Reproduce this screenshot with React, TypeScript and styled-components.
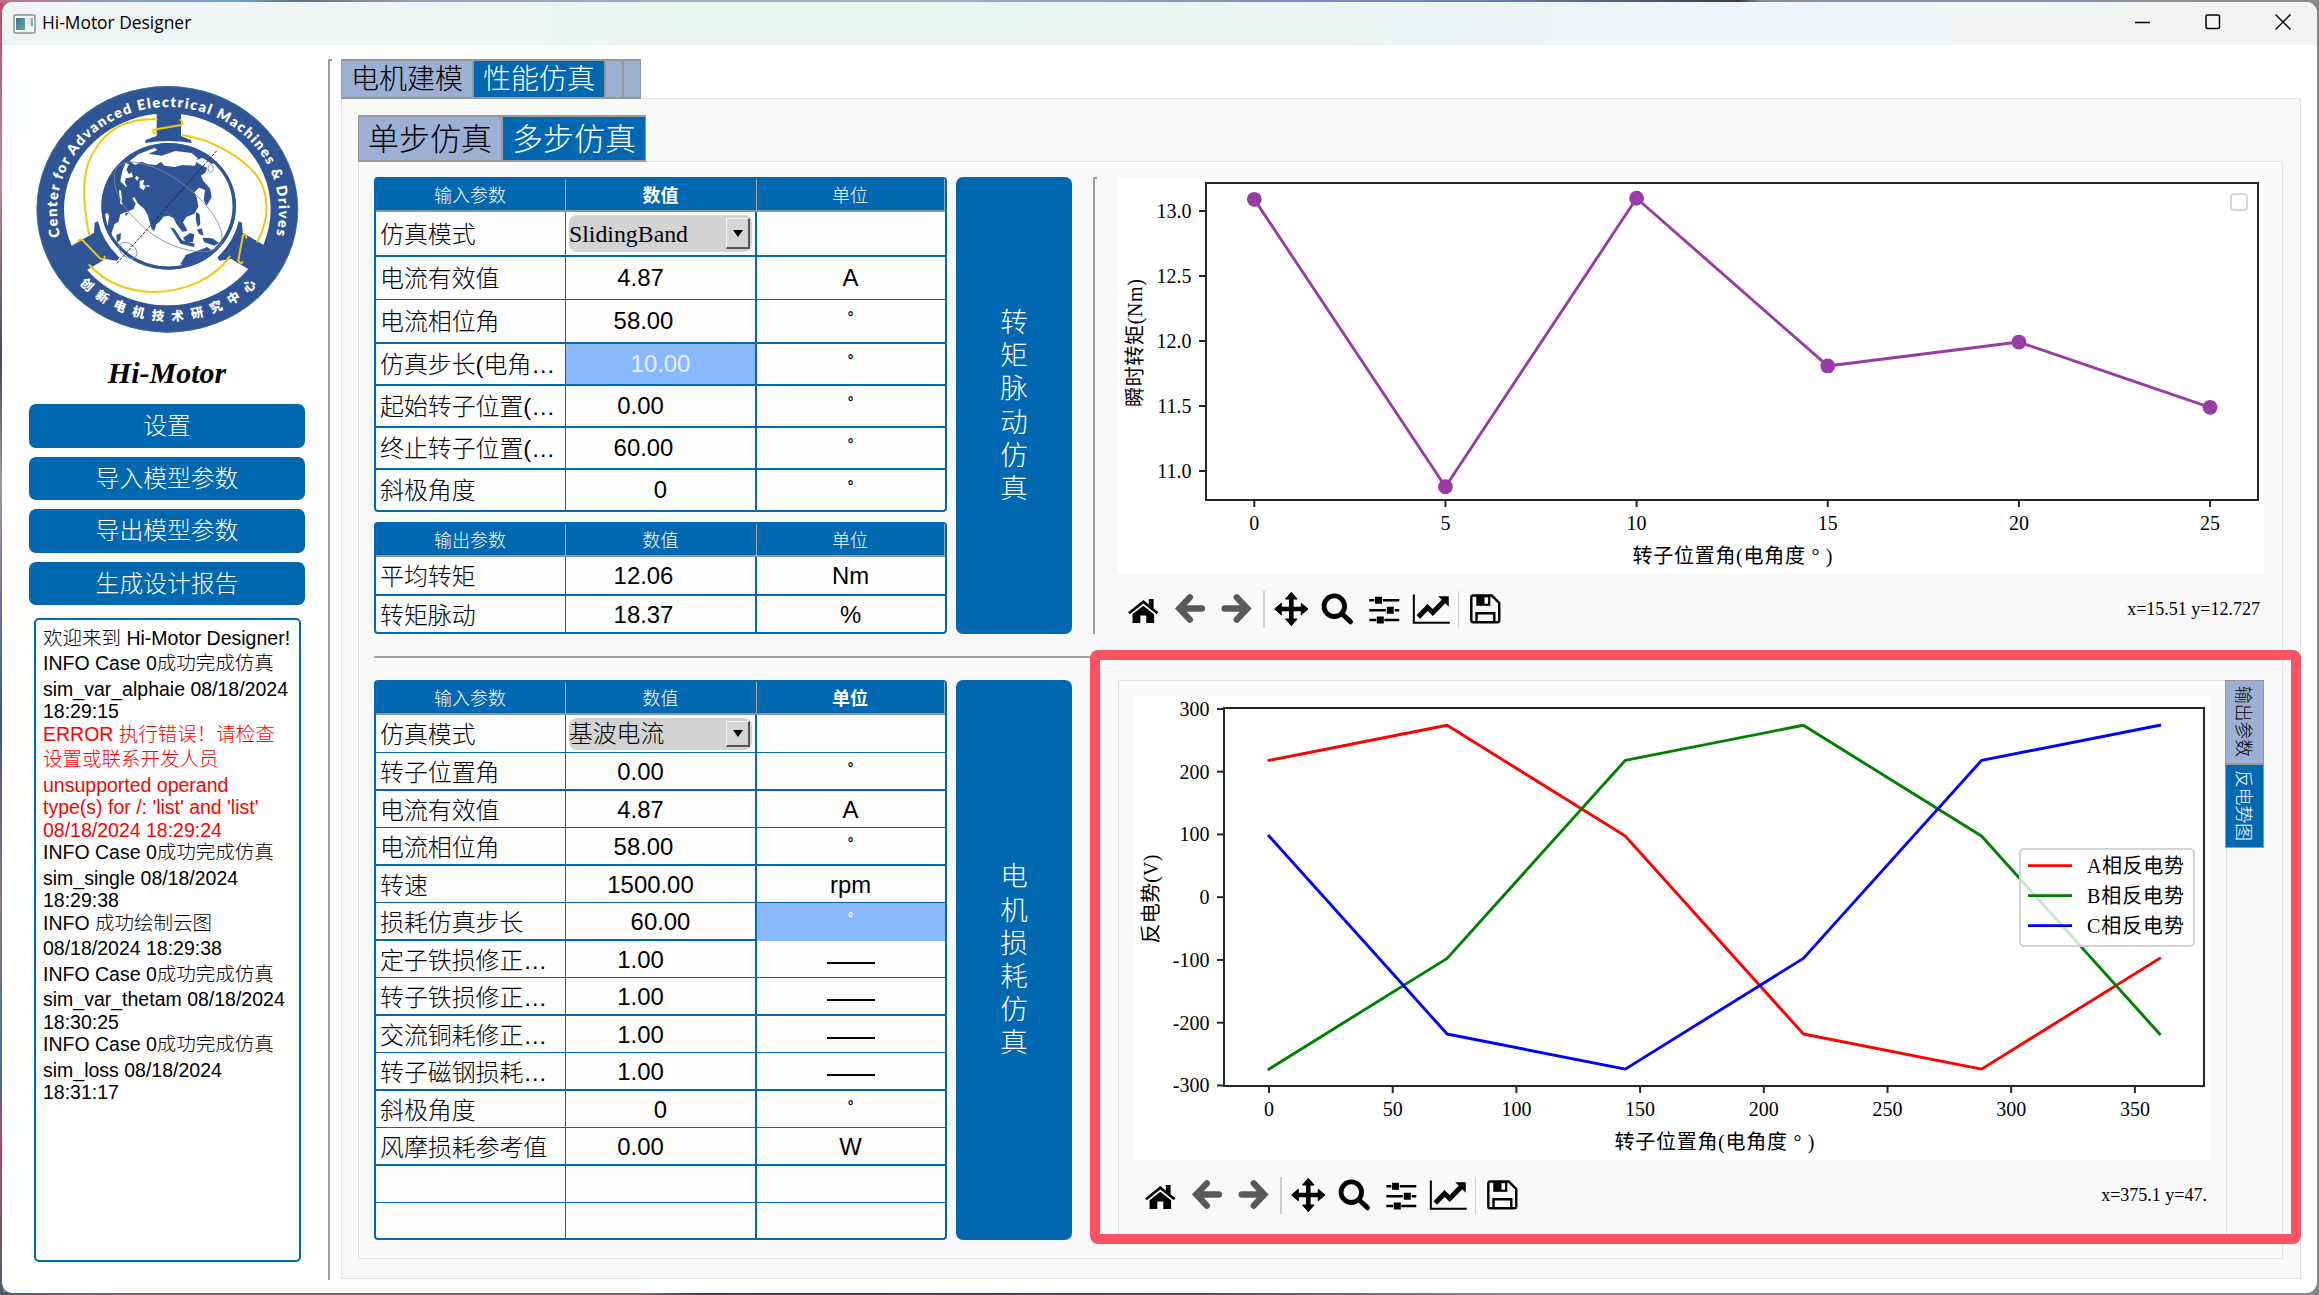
import React from "react";
import styled, { createGlobalStyle, css } from "styled-components";

const BLUE = "#0067b1";
const TAB_IDLE = "#9bb0d2";
const PANEL = "#f9f9f9";
const LINE = "#e2e2e2";
const SANS = `"Liberation Sans", "Noto Sans CJK SC", sans-serif`;
const SERIF = `"Liberation Serif", "Noto Sans CJK SC", serif`;

const GlobalStyle = createGlobalStyle`
  * { box-sizing: border-box; }
  body { margin: 0; overflow: hidden; font-family: ${SANS}; color: #000; }
`;

/* ---------- window frame ---------- */

const Desktop = styled.div`
  width: 2319px;
  height: 1295px;
  padding: 2px 2px 2px 2px;
  background:
    linear-gradient(90deg, #b8708a 0, #8d9db8 120px, #6fa0c8 240px, #62717f 300px, #9aa4b4 420px, #9fb0c8 900px, #6a7fae 1500px, #3c3c48 1740px, #8a8a8a 1760px, #8793b8 1850px, #8f8a8a 2319px) top / 100% 3px no-repeat,
    linear-gradient(90deg, #45606f 0, #7d6a62 120px, #7d6a62 640px, #3d414e 700px, #4c505b 1200px, #8a8886 1500px, #8a8886 2319px) bottom / 100% 3px no-repeat,
    linear-gradient(180deg, #c8446a 0, #b98aa0 180px, #45495a 360px, #9c9c9c 480px, #3f4fa0 720px, #8d7a78 900px, #3f6f95 1080px, #b8455a 1150px, #45606f 1295px) left / 3px 100% no-repeat,
    #858786;
`;

const Window = styled.div`
  display: flex;
  flex-direction: column;
  height: 1291px;
  border-radius: 11px;
  overflow: hidden;
  background: #fff;
`;

const TitleBar = styled.header`
  display: flex;
  align-items: center;
  height: 43px;
  padding: 0 26.5px 0 11px;
  background: linear-gradient(90deg, #f1f3f3 0, #eff4f3 450px, #e9f5ef 700px, #e9f5f0 1000px, #edf3f5 1500px, #eff3f8 1750px, #f3f3f3 2150px);
`;

const AppTitle = styled.span`
  flex: 1;
  margin-left: 6px;
  padding-bottom: 3px;
  font: 17.4px "Open Sans", "Noto Sans", sans-serif;
`;

const WindowButtons = styled.div`
  display: flex;
  gap: 54px;
  padding-bottom: 3px;
`;

const Body = styled.div`
  display: flex;
  flex: 1;
  padding-top: 14px;
`;

/* ---------- sidebar ---------- */

const Sidebar = styled.aside`
  display: flex;
  flex-direction: column;
  width: 326px;
  padding: 16px 23px 0 27px;
`;

const LogoBox = styled.div`
  width: 285px;
  height: 270px;
  margin-left: -4px;
`;

const Brand = styled.h1`
  margin: 8px 0 0;
  height: 51px;
  line-height: 40px;
  text-align: center;
  font: italic bold 30px/40px ${SERIF};
`;

const MenuButton = styled.button`
  height: 43.5px;
  margin: 0 0 9px;
  padding: 0 0 4px;
  border: 0;
  border-radius: 7px;
  background: ${BLUE};
  color: #fff;
  font: 300 23.8px ${SANS};
`;

const LogBox = styled.div`
  margin: 4px 4px 0 5px;
  height: 644px;
  padding: 7px 0 0 7px;
  border: 2.5px solid ${BLUE};
  border-radius: 5px;
`;

const LogLine = styled.div<{ $h: number; $error?: boolean }>`
  height: ${(p) => p.$h}px;
  line-height: 23px;
  white-space: nowrap;
  font-family: ${SANS};
  font-weight: 300;
  font-size: 19.5px;
  color: ${(p) => (p.$error ? "#f00" : "#000")};
`;

const SideDivider = styled.div`
  width: 4px;
  height: 1221px;
  border-left: 2px solid #a0a0a0;
  border-top: 2px solid #a0a0a0;
`;

/* ---------- tabs and panels ---------- */

const Main = styled.main`
  width: 1960px;
  margin-left: 9px;
`;

const TabBar = styled.div<{ $height: number }>`
  position: relative;
  display: flex;
  height: ${(p) => p.$height}px;
  margin-bottom: -1px;
`;

const Tab = styled.div<{ $w: number; $size: number; $active?: boolean }>`
  display: flex;
  align-items: center;
  justify-content: center;
  width: ${(p) => p.$w}px;
  border: 2px solid #989898;
  border-left-width: 1px;
  border-right-width: 1px;
  background: ${(p) => (p.$active ? BLUE : TAB_IDLE)};
  color: ${(p) => (p.$active ? "#fff" : "#000")};
  font: ${(p) => p.$size}px ${SANS};
  font-weight: 300;
  padding-bottom: 5px;
  white-space: nowrap;
`;

const Panel = styled.section<{ $height: number; $pad: string }>`
  height: ${(p) => p.$height}px;
  padding: ${(p) => p.$pad};
  border: 1px solid ${LINE};
  background: ${PANEL};
`;

const InnerPanel = styled(Panel)`
  width: 1925px;
`;

const Row = styled.div<{ $height: number }>`
  display: flex;
  height: ${(p) => p.$height}px;
`;

const TableColumn = styled.div`
  display: flex;
  flex-direction: column;
  justify-content: space-between;
  width: 573px;
`;

const HLine = styled.div`
  width: 1890px;
  height: 4px;
  margin: 22px 0 20px;
  border-top: 2px solid #a0a0a0;
  border-bottom: 2px solid #fff;
`;

const VLine = styled.div`
  width: 4px;
  margin-left: 21px;
  border-left: 2px solid #a0a0a0;
  border-top: 2px solid #a0a0a0;
`;

const RunButton = styled.button`
  width: 116px;
  margin-left: 9px;
  padding: 0 43px;
  border: 0;
  border-radius: 7px;
  background: ${BLUE};
  color: #fff;
  font: 27.5px/33.2px ${SANS};
  font-weight: 300;
  overflow-wrap: anywhere;
`;

/* ---------- parameter tables ---------- */

const Table = styled.div`
  border: 2px solid ${BLUE};
  border-radius: 4px;
  background: #fdfdfd;
`;

const TableRow = styled.div<{ $h: number; $line: number }>`
  display: grid;
  grid-template-columns: 190px 191px 188px;
  height: ${(p) => p.$h}px;
  border-bottom: ${(p) => p.$line}px solid ${BLUE};
`;

const HeadRow = styled(TableRow)`
  border-bottom: 0;
  background: ${BLUE};
`;

const HeadCell = styled.div<{ $bold?: boolean }>`
  display: flex;
  align-items: center;
  justify-content: center;
  padding: 0 1px 1px 0;
  border-right: 1px solid #a9a9a9;
  border-bottom: 2px solid #8b95a0;
  color: #fff;
  font: 18px ${SANS};
  font-weight: ${(p) => (p.$bold ? 700 : 300)};
`;

const cell = css`
  display: flex;
  align-items: center;
  min-width: 0;
  white-space: pre;
  font-size: 23.9px;
  font-family: ${SANS};
  font-weight: 300;
`;

const NameCell = styled.div`
  ${cell}
  padding: 0 0 3px 4px;
  border-right: 1px solid ${BLUE};
`;

const ValueCell = styled.div<{ $shift: number; $selected?: boolean }>`
  ${cell}
  justify-content: center;
  padding-right: ${(p) => p.$shift * 2}px;
  border-right: 2px solid ${BLUE};
  background: ${(p) => (p.$selected ? "#88b9ff" : "transparent")};
  color: ${(p) => (p.$selected ? "#e9eef8" : "#000")};
`;

const UnitCell = styled.div<{ $selected?: boolean }>`
  ${cell}
  justify-content: center;
  padding-right: 1px;
  background: ${(p) => (p.$selected ? "#88b9ff" : "transparent")};
  color: ${(p) => (p.$selected ? "#f4f7ff" : "#000")};
`;

const Degree = styled.span`
  font-size: 14px;
  font-weight: 700;
  padding-bottom: 8px;
`;

const Dash = styled.span`
  width: 48px;
  height: 2px;
  margin-top: 5px;
  background: #000;
`;

const ComboCell = styled.div`
  display: flex;
  padding: 3px 3px 3px 3px;
  border-right: 2px solid ${BLUE};
`;

const Combo = styled.div`
  display: flex;
  flex: 1;
  align-items: center;
  justify-content: space-between;
  padding: 3px 2px 3px 0;
  border-radius: 8px;
  background: #d3d3d3;
  font: 300 23.8px ${SERIF};
  line-height: 20px;
`;

const ComboArrow = styled.span`
  display: flex;
  align-items: center;
  justify-content: center;
  align-self: stretch;
  width: 24px;
  border: 1px solid #f4f4f4;
  border-right: 2px solid #555;
  border-bottom: 2px solid #555;
  background: #d6d6d6;
  &::after {
    content: "";
    border: 5.5px solid transparent;
    border-top: 7px solid #000;
    border-bottom: 0;
  }
`;

type ParamRow = {
  name: string;
  value?: string;
  unit?: string;
  h: number;
  line?: number;
  shift?: number;
  combo?: string;
  pickValue?: boolean;
  pickUnit?: boolean;
};

function Unit({ text }: { text?: string }) {
  if (text === "°") return <Degree>°</Degree>;
  if (text === "——") return <Dash />;
  return <>{text}</>;
}

function ParamTable({ title, bold, rows }: { title: string; bold?: string; rows: ParamRow[] }) {
  return (
    <Table>
      <HeadRow $h={33} $line={0}>
        {[title, "数值", "单位"].map((t) => (
          <HeadCell key={t} $bold={t === bold}>{t}</HeadCell>
        ))}
      </HeadRow>
      {rows.map((r, i) => (
        <TableRow key={i} $h={r.h} $line={r.line ?? 0}>
          <NameCell>{r.name}</NameCell>
          {r.combo ? (
            <ComboCell>
              <Combo>{r.combo}<ComboArrow /></Combo>
            </ComboCell>
          ) : (
            <ValueCell $shift={r.shift ?? 0} $selected={r.pickValue}>{r.value}</ValueCell>
          )}
          <UnitCell $selected={r.pickUnit}><Unit text={r.unit} /></UnitCell>
        </TableRow>
      ))}
    </Table>
  );
}

const torqueInputs: ParamRow[] = [
  { name: "仿真模式", combo: "SlidingBand", h: 45, line: 2 },
  { name: "电流有效值", value: "4.87", unit: "A", shift: 20, h: 43, line: 1 },
  { name: "电流相位角", value: "58.00", unit: "°", shift: 17, h: 44, line: 2 },
  { name: "仿真步长(电角…", value: "10.00", unit: "°", pickValue: true, h: 42, line: 2 },
  { name: "起始转子位置(…", value: "0.00", unit: "°", shift: 20, h: 42, line: 2 },
  { name: "终止转子位置(…", value: "60.00", unit: "°", shift: 17, h: 42, line: 2 },
  { name: "斜极角度", value: "0", unit: "°", h: 40 },
];

const torqueOutputs: ParamRow[] = [
  { name: "平均转矩", value: "12.06", unit: "Nm", shift: 17, h: 39, line: 2 },
  { name: "转矩脉动", value: "18.37", unit: "%", shift: 17, h: 36 },
];

const lossInputs: ParamRow[] = [
  { name: "仿真模式", combo: "基波电流", h: 38, line: 1 },
  { name: "转子位置角", value: "0.00", unit: "°", shift: 20, h: 38, line: 2 },
  { name: "电流有效值", value: "4.87", unit: "A", shift: 20, h: 37, line: 1 },
  { name: "电流相位角", value: "58.00", unit: "°", shift: 17, h: 38, line: 2 },
  { name: "转速", value: "1500.00", unit: "rpm", shift: 10, h: 37, line: 1 },
  { name: "损耗仿真步长", value: "60.00", unit: "°", pickUnit: true, h: 38, line: 2 },
  { name: "定子铁损修正…", value: "1.00", unit: "——", shift: 20, h: 37, line: 1 },
  { name: "转子铁损修正…", value: "1.00", unit: "——", shift: 20, h: 38, line: 2 },
  { name: "交流铜耗修正…", value: "1.00", unit: "——", shift: 20, h: 37, line: 1 },
  { name: "转子磁钢损耗…", value: "1.00", unit: "——", shift: 20, h: 38, line: 2 },
  { name: "斜极角度", value: "0", unit: "°", h: 37, line: 1 },
  { name: "风摩损耗参考值", value: "0.00", unit: "W", shift: 20, h: 38, line: 2 },
  { name: "", h: 37, line: 1 },
  { name: "", h: 35 },
];

/* ---------- charts ---------- */

const ChartColumn = styled.div<{ $ml: number }>`
  width: 1146px;
  margin-left: ${(p) => p.$ml}px;
`;

const ChartSvg = styled.svg`
  display: block;
  background: #fff;
  text {
    font-family: ${SERIF};
    font-size: 20px;
    fill: #000;
  }
`;

type Series = { color: string; name?: string; points: [number, number][] };
type ChartProps = {
  width: number;
  height: number;
  box: [number, number, number, number];
  sx: (v: number) => number;
  sy: (v: number) => number;
  xTicks: number[];
  yTicks: string[];
  xLabel: [number, number];
  yLabel: { text: string; x: number; y: number; len: number };
  series: Series[];
  markers?: boolean;
  children?: React.ReactNode;
};

function Chart({ width, height, box, sx, sy, xTicks, yTicks, xLabel, yLabel, series, markers, children }: ChartProps) {
  const [l, t, r, b] = box;
  return (
    <ChartSvg width={width} height={height} viewBox={`0 0 ${width} ${height}`}>
      {series.map((s) => (
        <g key={s.color}>
          <polyline
            points={s.points.map(([x, y]) => `${sx(x)},${sy(y)}`).join(" ")}
            fill="none"
            stroke={s.color}
            strokeWidth="2.9"
            strokeLinejoin="round"
            strokeLinecap="square"
          />
          {markers && s.points.map(([x, y]) => <circle key={x} cx={sx(x)} cy={sy(y)} r="7.4" fill={s.color} />)}
        </g>
      ))}
      <rect x={l} y={t} width={r - l} height={b - t} fill="none" stroke="#262626" strokeWidth="2" />
      {xTicks.map((v) => (
        <g key={v}>
          <path d={`M${sx(v)} ${b}v7`} stroke="#262626" strokeWidth="2" />
          <text x={sx(v)} y={b + 30} textAnchor="middle">{v}</text>
        </g>
      ))}
      {yTicks.map((v) => (
        <g key={v}>
          <path d={`M${l} ${sy(+v)}h-7`} stroke="#262626" strokeWidth="2" />
          <text x={l - 14.5} y={sy(+v) + 7} textAnchor="end">{v}</text>
        </g>
      ))}
      <text x={xLabel[0]} y={xLabel[1]} textAnchor="middle" textLength="200">转子位置角(电角度 ° )</text>
      <text
        transform={`translate(${yLabel.x} ${yLabel.y}) rotate(-90)`}
        textAnchor="middle"
        textLength={yLabel.len}
      >
        {yLabel.text}
      </text>
      {children}
    </ChartSvg>
  );
}

const torqueSeries: Series[] = [
  { color: "#983ca5", points: [[0, 13.09], [5, 10.879], [10, 13.098], [15, 11.808], [20, 11.992], [25, 11.49]] },
];

const emfSeries: Series[] = [
  { color: "#ff0000", name: "A相反电势", points: [[0, 218], [72, 274], [144, 97.5], [216, -218], [288, -274], [360, -97.5]] },
  { color: "#008000", name: "B相反电势", points: [[0, -274], [72, -97.5], [144, 218], [216, 274], [288, 97.5], [360, -218]] },
  { color: "#0000ff", name: "C相反电势", points: [[0, 97.5], [72, -218], [144, -274], [216, -97.5], [288, 218], [360, 274]] },
];

function TorqueChart() {
  return (
    <Chart
      width={1146}
      height={396}
      box={[88, 6, 1140, 323]}
      sx={(v) => 136.3 + v * 38.23}
      sy={(v) => 34 + (13 - v) * 130}
      xTicks={[0, 5, 10, 15, 20, 25]}
      yTicks={["13.0", "12.5", "12.0", "11.5", "11.0"]}
      xLabel={[614.5, 386]}
      yLabel={{ text: "瞬时转矩(Nm)", x: 24, y: 166, len: 128 }}
      series={torqueSeries}
      markers
    >
      <rect x="1113" y="17" width="16" height="16" rx="3" fill="#fff" stroke="#d6d6d6" strokeWidth="2" />
    </Chart>
  );
}

function EmfChart() {
  return (
    <Chart
      width={1075}
      height={464}
      box={[89, 12, 1069, 390]}
      sx={(v) => 134 + v * 2.474}
      sy={(v) => 201.2 - v * 0.6275}
      xTicks={[0, 50, 100, 150, 200, 250, 300, 350]}
      yTicks={["300", "200", "100", "0", "-100", "-200", "-300"]}
      xLabel={[579.5, 453]}
      yLabel={{ text: "反电势(V)", x: 23, y: 203, len: 89 }}
      series={emfSeries}
    >
      <rect x="885" y="153" width="174" height="97" rx="4" fill="#fff" fillOpacity="0.8" stroke="#d4d4d4" strokeWidth="2" />
      {emfSeries.map((s, i) => (
        <g key={s.color}>
          <path d={`M893 ${169.6 + i * 30}h44`} stroke={s.color} strokeWidth="2.9" />
          <text x="952" y={177 + i * 30} textLength="97">{s.name}</text>
        </g>
      ))}
    </Chart>
  );
}

/* ---------- plot toolbar ---------- */

const Toolbar = styled.div<{ $h: number; $pr: number }>`
  display: flex;
  align-items: center;
  height: ${(p) => p.$h}px;
  padding: 0 ${(p) => p.$pr}px 0 2px;
`;

const Tool = styled.svg`
  width: 46.6px;
  height: 36px;
  flex: none;
`;

const ToolSep = styled.i`
  width: 1.5px;
  height: 37px;
  margin: 0 3.3px;
  background: #d0d0d0;
`;

const Coords = styled.span`
  margin-left: auto;
  font: 18px ${SERIF};
`;

const vb = "-23.35 -18 46.7 36";

function PlotToolbar({ h, pr, coords }: { h: number; pr: number; coords: string }) {
  return (
    <Toolbar $h={h} $pr={pr}>
      <Tool viewBox={vb}>
        <path d="M-15.2 3.2 0-9 5.500-4.600V-10h4.800v9.300l4.900 3.900-1.700 2L0-5.400-13.500 5.200z" />
        <path d="M-10.800 5.300 0-3.300 10.800 5.300V14H3V6.500h-6V14h-7.800z" />
      </Tool>
      <Tool viewBox={vb}>
        <path d="M-.5-11.700-11-.5l10.500 11.200M-10-.5h21.600" fill="none" stroke="#595959" strokeWidth="6.400" strokeLinecap="round" strokeLinejoin="miter" />
      </Tool>
      <Tool viewBox={vb}>
        <path d="M.5-11.700 11-.5.5 10.700M10-.5h-21.600" fill="none" stroke="#595959" strokeWidth="6.400" strokeLinecap="round" strokeLinejoin="miter" />
      </Tool>
      <ToolSep />
      <Tool viewBox={vb}>
        <path d="M-12 0h24M0-12v24" stroke="#000" strokeWidth="4.600" />
        <path d="m0-16.700 5.800 6.700h-11.600zM0 16.700l5.800-6.700h-11.600zM-16.700 0l6.700-5.800v11.600zM16.700 0 10-5.800v11.600z" stroke="#000" strokeLinejoin="round" />
      </Tool>
      <Tool viewBox={vb}>
        <circle cx="-3" cy="-2.800" r="10.300" fill="none" stroke="#000" strokeWidth="4.800" />
        <path d="m5 5 8.200 7.800" stroke="#000" strokeWidth="5" strokeLinecap="round" />
      </Tool>
      <Tool viewBox={vb}>
        <path d="M-15-8.700h5M-1.500-8.700H15M-15 1.200H1.500M10.500 1.200H15M-15 11h7M0 11h15" stroke="#000" strokeWidth="2.600" />
        <path d="M-9.300-12.200h7v7h-7zM2.500-2.300h7v7h-7zM-7.500 7.500h7v7h-7z" />
      </Tool>
      <Tool viewBox={vb}>
        <path d="M-17.500-14.500v28.400h36" fill="none" stroke="#000" strokeWidth="2" />
        <path d="M-13 8-3.800-1.500l5.300 5L12.500-7.800" fill="none" stroke="#000" strokeWidth="5" />
        <path d="M7-12.700h10.500v10.500z" />
      </Tool>
      <ToolSep />
      <Tool viewBox={vb}>
        <path d="M-12-13.500H6.500L14-6v17.500a1.800 1.800 0 0 1-1.800 1.800h-24.400a1.800 1.800 0 0 1-1.800-1.800v-23.200A1.800 1.800 0 0 1-12-13.500z" fill="none" stroke="#000" strokeWidth="2.400" />
        <path d="M-9-13.500h14v10.300H-9z" />
        <path d="M-.8-11.800h3.600v6.500H-.8z" fill={PANEL} />
        <path d="M-8.800 13V4.200H9V13" fill="none" stroke="#000" strokeWidth="2.400" />
      </Tool>
      <Coords>{coords}</Coords>
    </Toolbar>
  );
}

/* ---------- lower right chart panel ---------- */

const EmfArea = styled.div`
  position: relative;
  display: flex;
  width: 1146px;
  margin-left: 46px;
`;

const EmfPanel = styled.div`
  width: 1109px;
  padding: 15px 16px;
  border: 1px solid ${LINE};
`;

const SideTabs = styled.div`
  width: 39px;
  margin-left: -2px;
`;

const SideTab = styled.div<{ $active?: boolean }>`
  display: flex;
  align-items: center;
  justify-content: center;
  width: 39px;
  height: 84px;
  border: 1.500px solid #989898;
  background: ${(p) => (p.$active ? BLUE : TAB_IDLE)};
  color: ${(p) => (p.$active ? "#fff" : "#000")};
  writing-mode: vertical-rl;
  text-orientation: sideways;
  font: 17.8px ${SANS};
  font-weight: 300;
`;

const Highlight = styled.div`
  position: absolute;
  left: -28px;
  top: -30px;
  width: 1211px;
  height: 594px;
  border: 10.500px solid #ff5263;
  border-radius: 8px;
`;

/* ---------- logo ---------- */

const LogoText = styled.text`
  fill: #fff;
  font-family: "Lato", "Noto Sans CJK SC", sans-serif;
  font-weight: 800;
`;

const NAVY = "#2f5597";

function Pole({ transform }: { transform?: string }) {
  return (
    <g transform={transform}>
      <path d="M395 95h73v88l30 12 2 9q-70-12-140 0l2-9 33-12z" fill={NAVY} />
    </g>
  );
}

function Logo() {
  return (
    <svg width="285" height="270" viewBox="0 0 855 810">
      <defs>
        <path id="ringTop" d="M106 484A333 312 0 1 1 752 484L740 520" />
        <path id="ringBottom" d="M163 626A361 336 0 0 0 700 626" />
        <clipPath id="globe"><ellipse cx="221" cy="214" rx="199" ry="187" /></clipPath>
      </defs>
      <ellipse cx="427" cy="403" rx="351" ry="329" fill="none" stroke={NAVY} strokeWidth="82" />
      <ellipse cx="427" cy="403" rx="391.500" ry="368" fill="none" stroke="#3f8080" strokeWidth="2" />
      <Pole />
      <path d="m135 515 72-42 2-30 10-4q14 62 64 108l-6 10-36-5-60 36z" fill={NAVY} />
      <path d="m725 515-72-42-2-30-10-4q-14 62-64 108l6 10 36-5 60 36z" fill={NAVY} />
      <g fill="none" stroke="#f2c80f" strokeWidth="6" strokeLinecap="round">
        <path d="M395 133C300 128 240 170 210 225C170 280 175 370 184 430Q188 465 194 480" />
        <path d="M472 180C570 195 650 250 690 295C735 350 735 430 697 500" />
        <path d="M193 570C240 620 300 650 385 651C480 650 570 610 614 545" />
        <path d="M395 176q-14-2-9-12l82-14q10-8-2-15M160 497q8-7 14 0l52 54q12 6 13-6M664 488q-2-14-10-8l-14 76q6 12 13 6" />
      </g>
      <g transform="translate(210 180)">
        <ellipse cx="221" cy="214" rx="202" ry="190" fill={NAVY} />
        <g clipPath="url(#globe)">
          <ellipse cx="219" cy="213" rx="194" ry="182" fill="#fff" />
          <g fill={NAVY}>
            <path d="M0 290V0H300L345 70 358 82 350 88 338 78 322 68 300 78 318 90 336 98 332 112 318 122 325 138 345 160 350 186 335 212 326 196 330 165 312 158 298 172 306 190 310 215 298 236 274 246 264 262 278 288 262 290 244 266 236 250 222 242 205 245 196 258 184 268 178 288 170 282 158 240 148 222 128 205 118 186 112 190 122 206 116 222 80 238 102 232 88 250 58 268 48 300Z" />
            <path d="M225 276l14 6 22 34 38 10-2 10-40-10zM264 308l22-14 12 4-4 24-22-2zM304 230l10 8 2 30-8 8-6-24zM306 284l14-4 6 22-14-6zM322 308l30 2 20 14-14 8-30-10zM256 388l16-28 44-16 20-8 12 8 24-4 10 20-60 50zM40 240l10 6-4 30-8 2zM64 300l14-6-2 22-10 6z" />
          </g>
          <g fill="#fff">
            <path d="M104 78 130 58 180 38 186 46 160 56 200 62 240 48 290 54 308 70 300 92 262 90 240 96 208 92 198 80 184 90 160 88 140 80 120 90z" />
            <path d="M92 84l10 4-8 16 8 14 8-6 4 14-22 4-2 12 6 14-6-2-14-16 6-30zM124 122l8 6-6 10-6-8zM134 138l14-4-4 14 8 6-6 12-12-8zM150 150l14 2-4 5zM72 166l6 0 4 44-6-4zM110 38l30-8-6 12-20 4z" />
            <path d="M22 240l16-6 4 10-8 60-12-24zM76 238l14-6 4 20-30 36z" />
          </g>
        </g>
        <ellipse cx="221" cy="214" rx="197" ry="185" fill="none" stroke={NAVY} strokeWidth="9" />
        <g fill="none" stroke="#808890" strokeWidth="2.500">
          <path d="M60 110C75 60 160 80 240 130C330 190 400 280 376 328C350 370 230 350 150 280C80 220 50 160 60 110z" />
          <ellipse cx="99" cy="346" rx="30" ry="20" transform="rotate(35 99 346)" />
          <ellipse cx="347" cy="101" rx="8" ry="12" />
        </g>
        <path d="M66 385 368 44" stroke="#222b3a" strokeWidth="3" strokeDasharray="9 4" />
      </g>
      <LogoText fontSize="43">
        <textPath href="#ringTop" textLength="1162">Center for Advanced Electrical Machines &amp; Drives</textPath>
      </LogoText>
      <LogoText fontSize="38">
        <textPath href="#ringBottom" textLength="590">创新电机技术研究中心</textPath>
      </LogoText>
    </svg>
  );
}

/* ---------- log ---------- */

const log: [string, number, boolean?][] = [
  ["欢迎来到 Hi-Motor Designer!", 25],
  ["INFO Case 0成功完成仿真", 26],
  ["sim_var_alphaie 08/18/2024", 22],
  ["18:29:15", 23],
  ["ERROR 执行错误！请检查", 25, true],
  ["设置或联系开发人员", 26, true],
  ["unsupported operand", 22, true],
  ["type(s) for /: 'list' and 'list'", 23, true],
  ["08/18/2024 18:29:24", 22, true],
  ["INFO Case 0成功完成仿真", 26],
  ["sim_single 08/18/2024", 22],
  ["18:29:38", 23],
  ["INFO 成功绘制云图", 25],
  ["08/18/2024 18:29:38", 26],
  ["INFO Case 0成功完成仿真", 25],
  ["sim_var_thetam 08/18/2024", 23],
  ["18:30:25", 22],
  ["INFO Case 0成功完成仿真", 26],
  ["sim_loss 08/18/2024", 22],
  ["18:31:17", 22],
];

export default function App() {
  return (
    <Desktop>
      <GlobalStyle />
      <Window>
        <TitleBar>
          <svg width="23" height="20" viewBox="0 0 23 20">
            <defs>
              <linearGradient id="appIcon" x1="0" y1="0" x2="1" y2="1">
                <stop offset="0" stopColor="#3a6ea8" />
                <stop offset="1" stopColor="#5fb07a" />
              </linearGradient>
            </defs>
            <rect x="1" y="1" width="21" height="18" rx="1" fill="#f4f6f6" stroke="#8a9095" strokeWidth="1.500" />
            <rect x="3" y="4" width="9" height="12" fill="url(#appIcon)" />
            <rect x="13.500" y="4" width="3" height="7" fill="#e2e8ee" />
            <rect x="17.500" y="4" width="2.500" height="8" fill="#7fb4b8" />
          </svg>
          <AppTitle>Hi-Motor Designer</AppTitle>
          <WindowButtons>
            <svg width="16" height="16"><path d="M0 8.500h15" stroke="#000" strokeWidth="1.300" /></svg>
            <svg width="16" height="16"><rect x="1" y="1" width="13.500" height="13.500" rx="1.500" fill="none" stroke="#000" strokeWidth="1.500" /></svg>
            <svg width="16" height="16"><path d="m.5.5 15 15M15.500.5l-15 15" stroke="#000" strokeWidth="1.400" /></svg>
          </WindowButtons>
        </TitleBar>
        <Body>
          <Sidebar>
            <LogoBox><Logo /></LogoBox>
            <Brand>Hi-Motor</Brand>
            {["设置", "导入模型参数", "导出模型参数", "生成设计报告"].map((t) => (
              <MenuButton key={t}>{t}</MenuButton>
            ))}
            <LogBox>
              {log.map(([text, h, error], i) => (
                <LogLine key={i} $h={h} $error={error}>{text}</LogLine>
              ))}
            </LogBox>
          </Sidebar>
          <SideDivider />
          <Main>
            <TabBar $height={40}>
              <Tab $w={132} $size={28}>电机建模</Tab>
              <Tab $w={132} $size={28} $active>性能仿真</Tab>
              <Tab $w={18} $size={27} />
              <Tab $w={18} $size={27} />
            </TabBar>
            <Panel $height={1181} $pad="16px">
              <TabBar $height={47}>
                <Tab $w={144} $size={31}>单步仿真</Tab>
                <Tab $w={144} $size={31} $active>多步仿真</Tab>
              </TabBar>
              <InnerPanel $height={1098} $pad="15px">
                <Row $height={457}>
                  <TableColumn>
                    <ParamTable title="输入参数" bold="数值" rows={torqueInputs} />
                    <ParamTable title="输出参数" rows={torqueOutputs} />
                  </TableColumn>
                  <RunButton>转矩脉动仿真</RunButton>
                  <VLine />
                  <ChartColumn $ml={21}>
                    <TorqueChart />
                    <PlotToolbar h={72} pr={4} coords="x=15.51 y=12.727" />
                  </ChartColumn>
                </Row>
                <HLine />
                <Row $height={560}>
                  <TableColumn>
                    <ParamTable title="输入参数" bold="单位" rows={lossInputs} />
                  </TableColumn>
                  <RunButton>电机损耗仿真</RunButton>
                  <EmfArea>
                    <EmfPanel>
                      <EmfChart />
                      <PlotToolbar h={70} pr={3} coords="x=375.1 y=47." />
                    </EmfPanel>
                    <SideTabs>
                      <SideTab>输出参数</SideTab>
                      <SideTab $active>反电势图</SideTab>
                    </SideTabs>
                    <Highlight />
                  </EmfArea>
                </Row>
              </InnerPanel>
            </Panel>
          </Main>
        </Body>
      </Window>
    </Desktop>
  );
}
